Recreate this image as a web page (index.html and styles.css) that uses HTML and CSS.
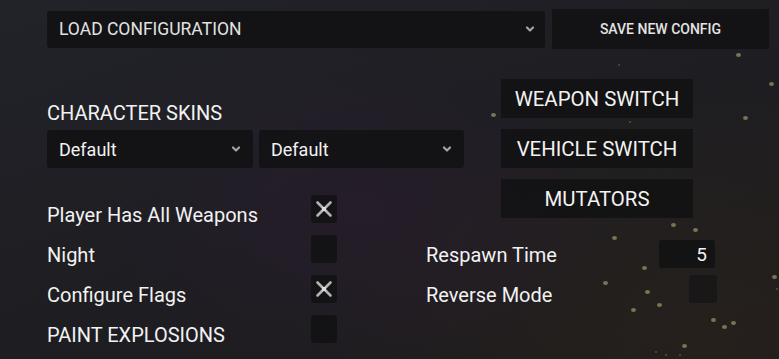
FILE: index.html
```html
<!DOCTYPE html>
<html>
    <head>
        <meta charset="utf-8">
        <title>Match Settings</title>
        <link rel="stylesheet" href="styles.css">
    </head>
    <body>
        <div class="sparks">
            <i style="left: 736px; top: 53px;"></i>
            <i style="left: 769px; top: 82px;"></i>
            <i style="left: 743px; top: 116px;"></i>
            <i style="left: 491px; top: 113px;"></i>
            <i style="left: 612px; top: 236px;"></i>
            <i style="left: 671px; top: 223px;"></i>
            <i style="left: 693px; top: 228px;"></i>
            <i style="left: 642px; top: 266px;"></i>
            <i style="left: 772px; top: 275px;"></i>
            <i style="left: 603px; top: 281px;"></i>
            <i style="left: 645px; top: 290px;"></i>
            <i style="left: 657px; top: 303px;"></i>
            <i style="left: 631px; top: 308px;"></i>
            <i style="left: 711px; top: 318px;"></i>
            <i style="left: 722px; top: 325px;"></i>
            <i style="left: 731px; top: 321px;"></i>
            <i style="left: 682px; top: 344px;"></i>
            <i class="tiny" style="left: 655px; top: 351px;"></i>
            <i class="tiny" style="left: 665px; top: 354px;"></i>
            <i class="tiny" style="left: 679px; top: 354px;"></i>
            <i class="tiny" style="left: 776px; top: 288px;"></i>
            <i class="tiny" style="left: 618px; top: 64px;"></i>
            <i class="tiny" style="left: 629px; top: 121px;"></i>
        </div>

        <div class="panel">
            <div class="topbar">
                <div class="select load">
                    <span>LOAD CONFIGURATION</span>
                    <svg class="chev" width="10" height="7" viewBox="0 0 10 7"><polyline points="2,1.5 5,4.5 8,1.5" /></svg>
                </div>
                <div class="btn save">SAVE NEW CONFIG</div>
            </div>

            <div class="settings">
                <div class="skins">
                    <div class="heading">CHARACTER SKINS</div>
                    <div class="skin-row">
                        <div class="select skin">
                            <span>Default</span>
                            <svg class="chev" width="10" height="7" viewBox="0 0 10 7"><polyline points="2,1.5 5,4.5 8,1.5" /></svg>
                        </div>
                        <div class="select skin">
                            <span>Default</span>
                            <svg class="chev" width="10" height="7" viewBox="0 0 10 7"><polyline points="2,1.5 5,4.5 8,1.5" /></svg>
                        </div>
                    </div>
                </div>

                <div class="btn big weapon">WEAPON SWITCH</div>
                <div class="btn big vehicle">VEHICLE SWITCH</div>
                <div class="btn big mutators">MUTATORS</div>

                <div class="toggles">
                    <div class="opt">
                        <span class="opt-label">Player Has All Weapons</span>
                        <span class="check">
                            <svg width="20" height="20" viewBox="0 0 20 20"><path d="M3.5 3.5 L16.5 16.5 M16.5 3.5 L3.5 16.5" /><rect x="8" y="8" width="4" height="4" /></svg>
                        </span>
                    </div>
                    <div class="opt">
                        <span class="opt-label">Night</span>
                        <span class="check"></span>
                    </div>
                    <div class="opt">
                        <span class="opt-label">Configure Flags</span>
                        <span class="check">
                            <svg width="20" height="20" viewBox="0 0 20 20"><path d="M3.5 3.5 L16.5 16.5 M16.5 3.5 L3.5 16.5" /><rect x="8" y="8" width="4" height="4" /></svg>
                        </span>
                    </div>
                    <div class="opt">
                        <span class="opt-label">PAINT EXPLOSIONS</span>
                        <span class="check"></span>
                    </div>
                </div>

                <div class="extras">
                    <div class="opt">
                        <span class="opt-label">Respawn Time</span>
                        <span class="num">5</span>
                    </div>
                    <div class="opt">
                        <span class="opt-label">Reverse Mode</span>
                        <span class="check wide"></span>
                    </div>
                </div>
            </div>
        </div>
    </body>
</html>
```

FILE: styles.css
```css
body {
    width: 779px;
    height: 359px;
    margin: 0;
    overflow: hidden;
    position: relative;
    color: #f2f2f2;
    font-family: Roboto, "Noto Sans", sans-serif;
    background:
        radial-gradient(ellipse 260px 170px at 360px 210px, rgba(48, 28, 54, 0.4), transparent),
        radial-gradient(ellipse 380px 260px at 700px 330px, rgba(46, 37, 27, 0.5), transparent),
        linear-gradient(160deg, #222329 0%, #1e1e23 45%, #1d1b1c 100%);
}

.sparks i {
    position: absolute;
    width: 5px;
    height: 4px;
    border-radius: 50%;
    background: #8e8a62;
    opacity: 0.8;
}

.sparks i.tiny {
    width: 2px;
    height: 2px;
    opacity: 0.45;
}

.panel {
    position: relative;
    padding: 9px 10px 0 47px;
}

/* shared controls */
.select,
.btn,
.check,
.num {
    background: rgba(16, 16, 18, 0.8);
    border-radius: 3px;
}

.select {
    display: flex;
    align-items: center;
    justify-content: space-between;
    box-sizing: border-box;
    padding: 0 10px 0 12px;
}

.chev polyline {
    fill: none;
    stroke: #a3a3a5;
    stroke-width: 2.2;
    stroke-linecap: round;
    stroke-linejoin: round;
}

.btn {
    display: flex;
    align-items: center;
    justify-content: center;
    border-radius: 0;
}

/* top bar */
.topbar {
    display: flex;
    align-items: center;
    gap: 7px;
    height: 40px;
}

.load {
    flex: 0 0 498px;
    height: 37px;
    font-size: 17.5px;
    color: #e2e2e2;
}

.save {
    width: 217px;
    height: 40px;
    font-size: 14px;
    font-weight: 500;
    color: #e4e4e4;
}

/* main grid */
.settings {
    display: grid;
    grid-template-columns: 379px 75px 192px 22px;
    grid-template-rows: 39px 39px 39px auto;
    row-gap: 11px;
    margin-top: 30px;
}

.skins {
    grid-column: 1 / 3;
    grid-row: 1 / 3;
    display: flex;
    flex-direction: column;
    justify-content: flex-end;
}

.heading {
    font-size: 20px;
    line-height: 22px;
    margin-bottom: 6px;
}

.skin-row {
    display: flex;
    gap: 6px;
}

.skin {
    width: 206px;
    height: 38px;
    font-size: 18px;
    padding-right: 12px;
}

.skin + .skin {
    width: 205px;
}

.big {
    grid-column: 3;
    font-size: 20.4px;
}

.weapon { grid-row: 1; }
.vehicle { grid-row: 2; }
.mutators { grid-row: 3; }

/* option rows */
.toggles {
    grid-column: 1;
    grid-row: 3 / 5;
    padding-top: 10px;
}

.extras {
    grid-column: 2 / 5;
    grid-row: 4;
}

.opt {
    display: flex;
    align-items: center;
    justify-content: space-between;
    height: 40px;
}

.toggles .opt {
    justify-content: flex-start;
}

.opt-label {
    font-size: 20px;
    margin-top: 12px;
}

.toggles .opt-label {
    width: 264px;
}

.check {
    display: flex;
    align-items: center;
    justify-content: center;
    width: 26px;
    height: 28px;
}

.check svg path {
    stroke: #b4b4b4;
    stroke-width: 2.6;
    stroke-linecap: round;
}

.check svg rect {
    fill: #dcdcdc;
}

.check.wide {
    width: 28px;
    margin-right: -2px;
    background: rgba(16, 16, 18, 0.55);
}

.num {
    display: flex;
    align-items: center;
    justify-content: flex-end;
    box-sizing: border-box;
    width: 56px;
    height: 28px;
    margin-top: 10px;
    padding-right: 8px;
    font-size: 19px;
}
```
